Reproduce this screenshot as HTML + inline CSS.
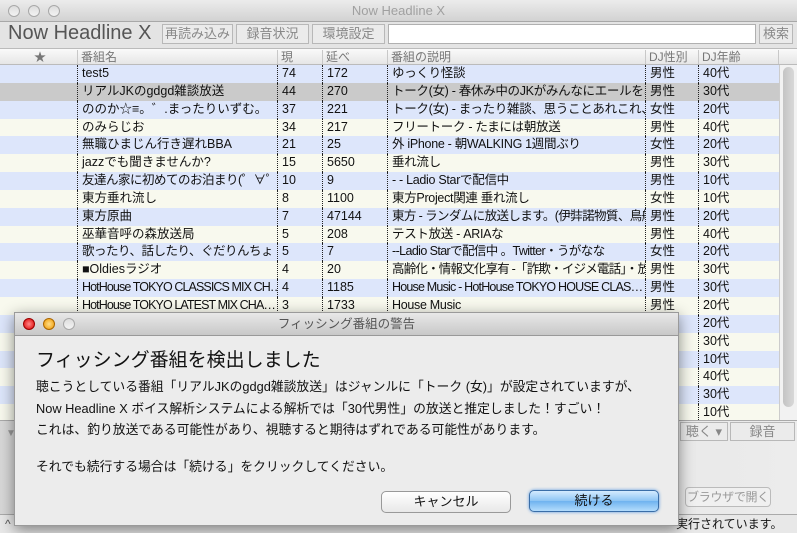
<!DOCTYPE html>
<html><head><meta charset="utf-8"><style>
*{margin:0;padding:0;box-sizing:border-box}
body{width:797px;height:533px;overflow:hidden;background:#e4e4e4;font-family:"Liberation Sans","Noto Sans CJK JP",sans-serif;position:relative;font-size:13px;color:#111}
.a{position:absolute}
.tb{left:0;top:0;width:797px;height:22px;background:linear-gradient(#ececec,#d2d2d2);border-bottom:1px solid #a8a8a8;text-align:center;line-height:22px;color:#a0a0a0;font-size:13px}
.dot{position:absolute;top:5px;width:12px;height:12px;border-radius:50%;border:1px solid #a8a8a8;background:linear-gradient(#ddd,#f4f4f4)}
.btn{position:absolute;top:24px;height:20px;border:1px solid #b8b8b8;background:#ebebeb;color:#888;font-size:13px;text-align:center;line-height:18px;white-space:nowrap}
.hdr{left:0;top:48px;width:797px;height:17px;background:linear-gradient(#fafafa,#e6e6e6);border-bottom:1px solid #bbb;border-top:1px solid #bbb;color:#777;font-size:12px}
.hdr span{position:absolute;top:1px;padding-left:3px;border-left:1px solid #c8c8c8;height:14px;line-height:14px}
.rows{left:0;top:65px;width:779px;height:355px;overflow:hidden;background:#fff}
.r{position:relative;height:17.85px;line-height:17.85px;font-size:12.5px;white-space:nowrap}
.r span{position:absolute;top:0;padding-left:4px;border-left:1px dotted #222;height:100%;overflow:hidden}
.r span:nth-child(1){width:200px}
.r span:nth-child(2){width:45px}
.r span:nth-child(3){width:65px}
.r span:nth-child(4){width:258px;letter-spacing:-.3px}
.r span:nth-child(5){width:53px}
.r span:nth-child(6){width:80px}
.r span.o{width:80px}
.b{background:#dde6fb}.y{background:#f8f9ee}.s{background:#cacaca}
.dlg{left:14px;top:312px;width:665px;height:214px;background:#ececec;border:1px solid #9a9a9a;box-shadow:0 4px 14px rgba(0,0,0,.45)}
.dt{height:23px;background:linear-gradient(#e8e8e8,#c8c8c8);border-bottom:1px solid #999;text-align:center;line-height:23px;color:#555;font-size:12.5px}
.db{position:absolute;height:22px;border-radius:5px;text-align:center;line-height:20px;font-size:13px}
</style></head><body>
<div class="a tb">Now Headline X
<div class="dot" style="left:8px"></div><div class="dot" style="left:28px"></div><div class="dot" style="left:48px"></div></div>
<div class="a" style="left:8px;top:21px;font-size:20px;color:#555;line-height:24px">Now Headline X</div>
<div class="btn" style="left:162px;width:71px">再読み込み</div>
<div class="btn" style="left:236px;width:73px">録音状況</div>
<div class="btn" style="left:312px;width:73px">環境設定</div>
<div class="a" style="left:388px;top:24px;width:368px;height:20px;background:#fff;border:1px solid #b0b0b0"></div>
<div class="btn" style="left:759px;width:34px">検索</div>
<div class="a hdr"><span style="left:0;border:0;width:77px;text-align:center">★</span><span style="left:77px">番組名</span><span style="left:277px">現</span><span style="left:322px">延べ</span><span style="left:387px">番組の説明</span><span style="left:645px">DJ性別</span><span style="left:698px">DJ年齢</span><span style="left:778px"></span></div>
<div class="a rows">
<div class="r b"><span style="left:77px">test5</span><span style="left:277px">74</span><span style="left:322px">172</span><span style="left:387px">ゆっくり怪談</span><span style="left:645px">男性</span><span style="left:698px">40代</span></div>
<div class="r s"><span style="left:77px">リアルJKのgdgd雑談放送</span><span style="left:277px">44</span><span style="left:322px">270</span><span style="left:387px">トーク(女) - 春休み中のJKがみんなにエールをお…</span><span style="left:645px">男性</span><span style="left:698px">30代</span></div>
<div class="r b"><span style="left:77px">ののか☆≡。゛.まったりいずむ。</span><span style="left:277px">37</span><span style="left:322px">221</span><span style="left:387px">トーク(女) - まったり雑談、思うことあれこれ、時々…</span><span style="left:645px">女性</span><span style="left:698px">20代</span></div>
<div class="r y"><span style="left:77px">のみらじお</span><span style="left:277px">34</span><span style="left:322px">217</span><span style="left:387px">フリートーク - たまには朝放送</span><span style="left:645px">男性</span><span style="left:698px">40代</span></div>
<div class="r b"><span style="left:77px">無職ひまじん行き遅れBBA</span><span style="left:277px">21</span><span style="left:322px">25</span><span style="left:387px">外 iPhone - 朝WALKING 1週間ぶり</span><span style="left:645px">女性</span><span style="left:698px">20代</span></div>
<div class="r y"><span style="left:77px">jazzでも聞きませんか?</span><span style="left:277px">15</span><span style="left:322px">5650</span><span style="left:387px">垂れ流し</span><span style="left:645px">男性</span><span style="left:698px">30代</span></div>
<div class="r b"><span style="left:77px;letter-spacing:-.5px">友達ん家に初めてのお泊まり(゜∀゜)</span><span style="left:277px">10</span><span style="left:322px">9</span><span style="left:387px">- - Ladio Starで配信中</span><span style="left:645px">男性</span><span style="left:698px">10代</span></div>
<div class="r y"><span style="left:77px">東方垂れ流し</span><span style="left:277px">8</span><span style="left:322px">1100</span><span style="left:387px">東方Project関連 垂れ流し</span><span style="left:645px">女性</span><span style="left:698px">10代</span></div>
<div class="r b"><span style="left:77px">東方原曲</span><span style="left:277px">7</span><span style="left:322px">47144</span><span style="left:387px;letter-spacing:-.6px">東方 - ランダムに放送します。(伊弉諾物質、鳥船…</span><span style="left:645px">男性</span><span style="left:698px">20代</span></div>
<div class="r y"><span style="left:77px">巫華音呼の森放送局</span><span style="left:277px">5</span><span style="left:322px">208</span><span style="left:387px">テスト放送 - ARIAな</span><span style="left:645px">男性</span><span style="left:698px">40代</span></div>
<div class="r b"><span style="left:77px;letter-spacing:-.5px">歌ったり、話したり、ぐだりんちょ</span><span style="left:277px">5</span><span style="left:322px">7</span><span style="left:387px;letter-spacing:-.6px">--Ladio Starで配信中 。Twitter・うがなな</span><span style="left:645px">女性</span><span style="left:698px">20代</span></div>
<div class="r y"><span style="left:77px">■Oldiesラジオ</span><span style="left:277px">4</span><span style="left:322px">20</span><span style="left:387px;letter-spacing:-.8px">高齢化・情報文化享有 -「詐欺・イジメ電話」・放…</span><span style="left:645px">男性</span><span style="left:698px">30代</span></div>
<div class="r b"><span style="left:77px;letter-spacing:-.9px">HotHouse TOKYO CLASSICS MIX CH…</span><span style="left:277px">4</span><span style="left:322px">1185</span><span style="left:387px;letter-spacing:-.8px">House Music - HotHouse TOKYO HOUSE CLAS…</span><span style="left:645px">男性</span><span style="left:698px">30代</span></div>
<div class="r y"><span style="left:77px;letter-spacing:-.9px">HotHouse TOKYO LATEST MIX CHA…</span><span style="left:277px">3</span><span style="left:322px">1733</span><span style="left:387px">House Music</span><span style="left:645px">男性</span><span style="left:698px">20代</span></div>
<div class="r b"><span class="o" style="left:698px">20代</span></div>
<div class="r y"><span class="o" style="left:698px">30代</span></div>
<div class="r b"><span class="o" style="left:698px">10代</span></div>
<div class="r y"><span class="o" style="left:698px">40代</span></div>
<div class="r b"><span class="o" style="left:698px">30代</span></div>
<div class="r y"><span class="o" style="left:698px">10代</span></div>
</div>
<div class="a" style="left:779px;top:65px;width:18px;height:355px;background:#f2f2f2;border-left:1px solid #ccc"><div style="margin:2px 3px;width:11px;height:340px;border-radius:6px;background:linear-gradient(90deg,#c4c4c4,#d8d8d8)"></div></div>
<div class="a" style="left:0;top:420px;width:797px;height:94px;background:linear-gradient(90deg,#d8d8d8,#ececec);border-top:1px solid #aaa"></div>
<div class="btn" style="left:680px;top:422px;width:48px;height:19px">聴く ▾</div>
<div class="btn" style="left:730px;top:422px;width:65px;height:19px">録音</div>
<div class="a" style="left:685px;top:487px;width:86px;height:20px;border:1px solid #bbb;border-radius:4px;background:#f0f0f0;color:#999;font-size:12px;text-align:center;line-height:18px;white-space:nowrap;letter-spacing:-.3px">ブラウザで開く</div>
<div class="a" style="left:0;top:514px;width:797px;height:19px;background:#e8e8e8;border-top:1px solid #aaa;font-size:12px;line-height:18px"><span style="position:absolute;left:676px">実行されています。</span><span style="position:absolute;left:5px;color:#555">^</span></div>
<div class="a" style="left:6px;top:428px;color:#999;font-size:10px">▼</div>
<div class="a dlg">
<div class="dt">フィッシング番組の警告</div>
<div class="dot" style="left:8px;top:5px;background:radial-gradient(#f88,#d00);border-color:#900"></div>
<div class="dot" style="left:28px;top:5px;background:radial-gradient(#fd8,#e90);border-color:#a60"></div>
<div class="dot" style="left:48px;top:5px"></div>
<div class="a" style="left:21px;top:36px;font-size:19px;line-height:24px">フィッシング番組を検出しました</div>
<div class="a" style="left:21px;top:63px;font-size:12.8px;line-height:21.5px;white-space:nowrap">聴こうとしている番組「リアルJKのgdgd雑談放送」はジャンルに「トーク (女)」が設定されていますが、<br>Now Headline X ボイス解析システムによる解析では「30代男性」の放送と推定しました！すごい！<br>これは、釣り放送である可能性があり、視聴すると期待はずれである可能性があります。<br><div style="height:15px"></div>それでも続行する場合は「続ける」をクリックしてください。</div>
<div class="db" style="left:366px;top:178px;width:130px;background:linear-gradient(#fff,#e8e8e8);border:1px solid #999">キャンセル</div>
<div class="db" style="left:514px;top:177px;width:130px;background:linear-gradient(#d4ebff,#8cc4f4 50%,#6fb3ef 51%,#b4dcfc);border:1px solid #3a6ea8;box-shadow:0 0 3px #5a9ae0">続ける</div>
</div>
</body></html>
